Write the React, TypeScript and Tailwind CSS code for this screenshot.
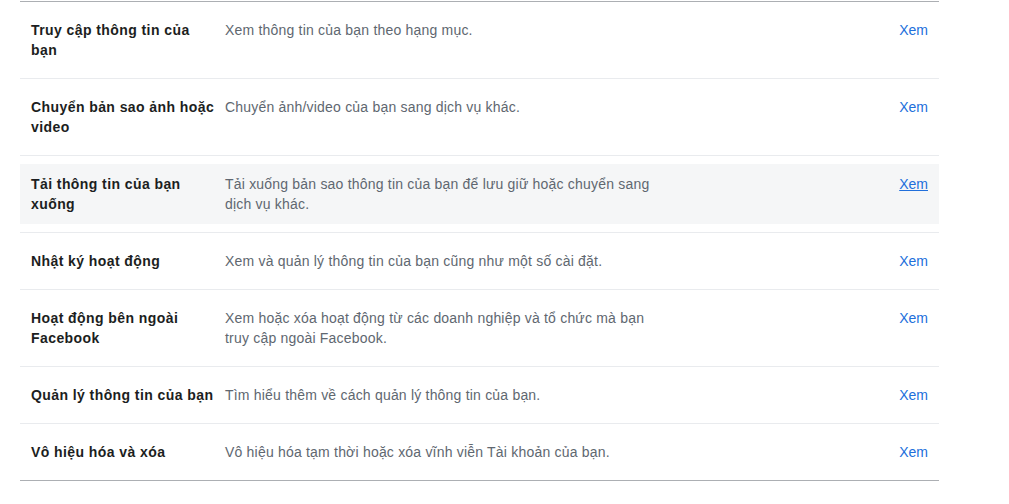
const rows = [
  {
    title: "Truy cập thông tin của bạn",
    text: "Xem thông tin của bạn theo hạng mục.",
  },
  {
    title: "Chuyển bản sao ảnh hoặc video",
    text: "Chuyển ảnh/video của bạn sang dịch vụ khác.",
  },
  {
    title: "Tải thông tin của bạn xuống",
    text: "Tải xuống bản sao thông tin của bạn để lưu giữ hoặc chuyển sang dịch vụ khác.",
    active: true,
  },
  {
    title: "Nhật ký hoạt động",
    text: "Xem và quản lý thông tin của bạn cũng như một số cài đặt.",
  },
  {
    title: "Hoạt động bên ngoài Facebook",
    text: "Xem hoặc xóa hoạt động từ các doanh nghiệp và tổ chức mà bạn truy cập ngoài Facebook.",
  },
  {
    title: "Quản lý thông tin của bạn",
    text: "Tìm hiểu thêm về cách quản lý thông tin của bạn.",
  },
  {
    title: "Vô hiệu hóa và xóa",
    text: "Vô hiệu hóa tạm thời hoặc xóa vĩnh viễn Tài khoản của bạn.",
  },
];

export default function App() {
  return (
    <div className="min-h-screen bg-white pt-px font-['Liberation_Sans',Arial,sans-serif] text-[14px] leading-5">
      <div className="ml-5 w-[919px] border-y border-[#acafb3]">
        {rows.map((row, i) => (
          <div key={row.title} className={i > 0 ? "border-t border-[#e9ebee] py-2" : "py-2"}>
            <div className={`flex items-start py-2.5 ${row.active ? "bg-[#f5f6f7]" : ""}`}>
              <div className="w-[205px] shrink-0 pl-[11px] pr-[6px] font-bold tracking-[0.42px] text-[#1c1e21]">
                {row.title}
              </div>
              <div className="w-[440px] shrink-0 tracking-[0.2px] text-[#606770]">{row.text}</div>
              <div className="flex flex-1 justify-end pr-[11px]">
                <a href="#" className={`text-[#216fdb] ${row.active ? "underline" : "no-underline"}`}>
                  Xem
                </a>
              </div>
            </div>
          </div>
        ))}
      </div>
    </div>
  );
}
